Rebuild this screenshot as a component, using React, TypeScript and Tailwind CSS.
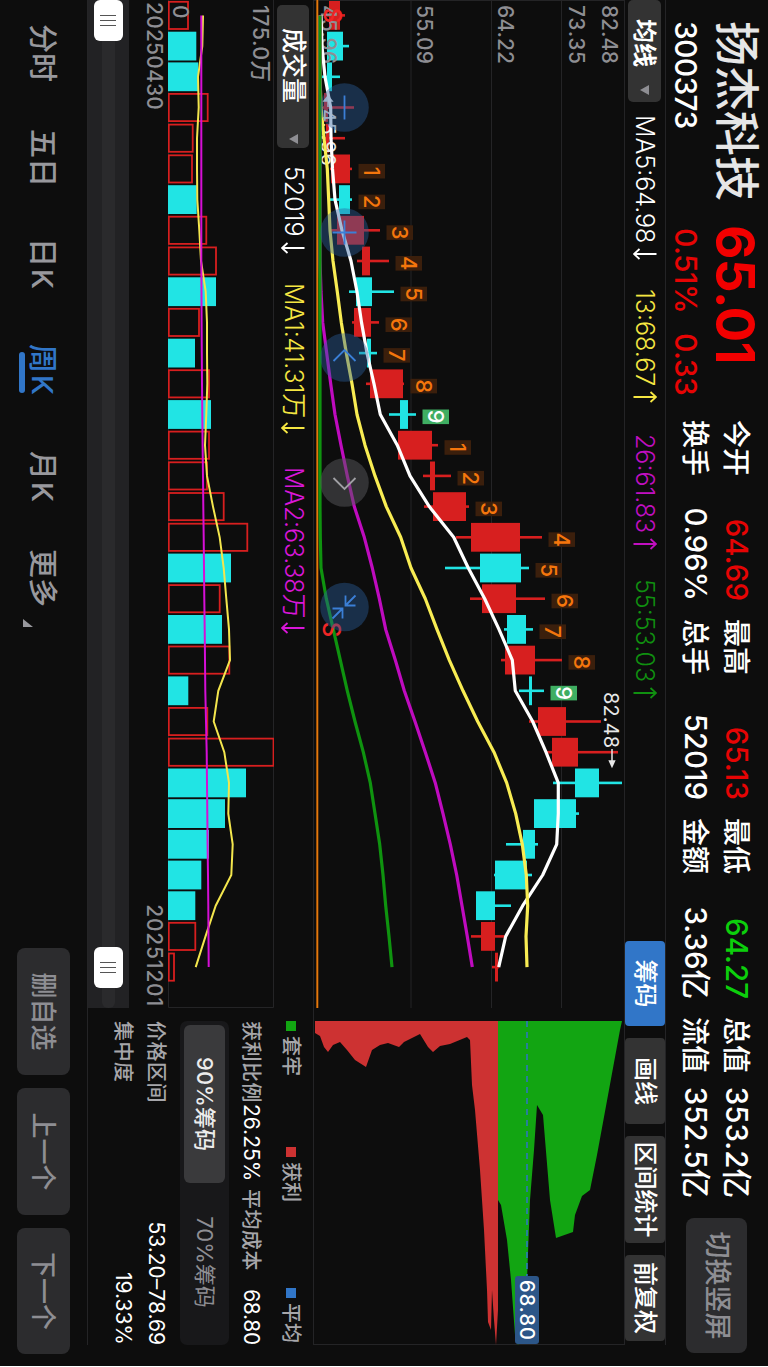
import clsx from "clsx";

const STEP = 30.7;
const cx = (i: number) => 15.4 + i * STEP;

const RED = "#d71f1f";
const CYAN = "#21e4e4";

// low, body bottom, body top, high, direction
const candles: [number, number, number, number, "r" | "c"][] = [
  [10, 12, 23, 28, "r"], [10, 10, 26, 32, "c"], [5, 10, 15, 23, "c"], [6, 7, 11, 37, "r"],
  [8, 9, 12, 28, "r"], [13, 14, 33, 35, "r"], [11, 22, 33, 35, "c"], [14, 20, 47, 63, "r"],
  [40, 45, 53, 72, "r"], [32, 39, 55, 77, "c"], [35, 37, 54, 62, "r"], [42, 50, 54, 60, "c"],
  [49, 53, 86, 87, "r"], [72, 83, 91, 99, "c"], [81, 81, 115, 121, "r"], [106, 113, 118, 134, "r"],
  [107, 116, 149, 152, "r"], [139, 154, 203, 225, "r"], [128, 163, 204, 212, "c"], [153, 165, 199, 228, "r"],
  [187, 190, 209, 216, "c"], [184, 188, 218, 245, "r"], [202, 212, 215, 227, "c"], [212, 221, 249, 284, "r"],
  [230, 235, 261, 301, "r"], [236, 258, 282, 305, "c"], [217, 217, 259, 262, "c"], [189, 206, 218, 221, "c"],
  [177, 178, 210, 215, "c"], [159, 159, 178, 194, "c"], [154, 164, 178, 187, "r"], [175, 178, 181, 182, "r"],
];

// sequential counts, starting from the sixth candle
const counts = [1, 2, 3, 4, 5, 6, 7, 8, 9, 1, 2, 3, 4, 5, 6, 7, 8, 9];

const ma5 = [4, 5, 8, 13.7, 14, 15.5, 18, 25, 34, 40, 44.5, 50, 57, 63.3, 80.3, 93, 112.3, 136.7, 151.3, 167.7, 182, 195.3, 198.3, 215.7, 229, 241.3, 241.3, 239.7, 225.7, 205.7, 188.7, 181.7];
const ma13 = [3, 3, 3, 4, 7, 10.3, 11.7, 13, 16, 20.3, 24.3, 29.3, 35, 40, 48, 58, 69.3, 83.7, 94, 108.3, 120, 132.3, 146, 160.7, 177, 189.7, 198.7, 205.3, 209.3, 210.7, 209, 210];
const ma26 = [3, 3, 3, 3, 3, 3, 3, 3, 3, 4, 5.7, 9.7, 13.7, 18, 24, 30.3, 37.3, 47.3, 55.3, 62.3, 68.7, 78.3, 87.3, 98, 108.3, 118.3, 126, 133.3, 139.7, 145, 150.3, 155.3];
const ma55 = [3, 3, 3, 3, 3, 3, 3, 3, 3, 3, 3, 3, 3, 3, 3, 3, 3, 3.3, 4, 9.3, 16.3, 23.3, 30.3, 38, 46.3, 53.3, 58, 62.7, 66, 68.7, 72, 75];

const volumes = [20, 28.3, 30.3, 39.7, 24.7, 24, 28.7, 38.3, 48, 48, 31, 27, 41, 43, 41, 39, 55.7, 79.3, 63, 51.7, 54, 61.3, 20.3, 39.3, 105.5, 78, 57, 41, 33.3, 27.3, 27.3, 6];
const volMa1 = [35, 34.3, 30, 30.7, 29, 29, 29.3, 31.3, 33, 37.7, 39, 39, 39.3, 38.3, 37, 39, 45, 51.7, 55.7, 58.3, 61, 62, 50.3, 45.7, 56.3, 61, 60.3, 64.7, 63.3, 47.7, 37.5, 27.7];
const volMa2 = [33.3, 33.3, 33.3, 33.3, 33.3, 33.3, 33.3, 33.3, 33.3, 33.5, 33.6, 33.8, 34, 34.3, 34.6, 35, 35.3, 35.7, 36, 36.3, 36.7, 37, 37.3, 38, 38.7, 39, 39.3, 39.6, 40, 40.3, 40.5, 40.7];

const line = (data: number[], base: number) =>
  data.map((d, i) => `${cx(i)},${base - d}`).join(" ");

const grids = [0.5, 63.5, 133.5, 214];

const prices = [
  { label: "82.48", y: 23 },
  { label: "73.35", y: 56 },
  { label: "64.22", y: 127 },
  { label: "55.09", y: 208 },
  { label: "45.96", y: 304 },
];

const quotes = [
  [["今开", "64.69", "text-[#e60404]"], ["换手", "0.96%", "text-white"]],
  [["最高", "65.13", "text-[#e60404]"], ["总手", "52019", "text-white"]],
  [["最低", "64.27", "text-[#0ccf0c]"], ["金额", "3.36亿", "text-white"]],
  [["总值", "353.2亿", "text-white"], ["流值", "352.5亿", "text-white"]],
];

const tabs = [
  { name: "分时", width: "w-[105px]" },
  { name: "五日", width: "w-[109px]" },
  { name: "日K", width: "w-[106px] tracking-[2px]" },
  { name: "周K", width: "w-[107px] tracking-[2px]" },
  { name: "月K", width: "w-[98px] tracking-[2px]" },
  { name: "更多", width: "w-[96px]" },
];

function Arrow({ down }: { down?: boolean }) {
  return (
    <svg width="14" height="24" viewBox="0 0 14 24" fill="none" stroke="currentColor" strokeWidth="1.8" className={clsx("shrink-0", down && "rotate-180")}>
      <path d="M7 23.5V1M2 6.5 7 1l5 5.5" />
    </svg>
  );
}

function Caret() {
  return (
    <svg width="10" height="9" viewBox="0 0 10 9" className="shrink-0">
      <path d="M0 0h10L5 9z" fill="#8e8e93" />
    </svg>
  );
}

function Header() {
  return (
    <header className="flex h-[102px] shrink-0 text-white">
      <div className="w-[205px] pl-[21px]">
        <h1 className="mt-[8px] text-[45px] leading-[48px] font-medium text-[#e6e6e6]">扬杰科技</h1>
        <div className="mt-[8px] text-[30px] leading-[36px] font-medium tracking-[-0.7px]">300373</div>
      </div>
      <div className="w-[215px] pl-[20px] text-[#e60404]">
        <div className="mt-[7px] text-[53px] leading-[52px] font-bold tracking-[-0.6px] text-[#f20000]">65.01</div>
        <div className="mt-[5px] flex gap-[20px] pl-[3px] text-[30px] leading-[36px] font-medium">
          <span className="tracking-[-0.6px]">0.51%</span>
          <span className="tracking-[-0.6px]">0.33</span>
        </div>
      </div>
      <div className="flex gap-[18px]">
        {quotes.map((rows, i) => (
          <div key={i} className="w-[181px] pt-[11px]">
            {rows.map(([label, value, color]) => (
              <div key={label} className="flex h-[41px] items-center justify-between">
                <span className="text-[28px] font-medium">{label}</span>
                <span className={clsx("text-[29.5px] font-medium whitespace-nowrap", color)}>{value}</span>
              </div>
            ))}
          </div>
        ))}
      </div>
      <button className="mt-[21px] ml-[20px] h-[61px] w-[135px] rounded-lg bg-[#2c2c2e] text-[27px] font-medium text-[#8e8e93]">
        切换竖屏
      </button>
    </header>
  );
}

function Toolbar() {
  const btn = "h-[40px] rounded-[4px] text-[24px] font-medium text-white";
  return (
    <div className="flex h-[40px] shrink-0 text-[25px] font-[350]">
      <div className="mt-[4px] flex h-[33px] w-[102px] items-center gap-[18px] rounded-[5px] bg-[#333333] pl-[19px] text-[24px] font-bold text-white">
        均线 <Caret />
      </div>
      <div className="flex w-[839px] items-center pl-[13px] leading-[38px]">
        <span className="flex w-[174px] items-center gap-1 text-white">MA5:64.98 <Arrow down /></span>
        <span className="flex w-[145px] items-center gap-1 text-[#f5e642]">13:68.67 <Arrow /></span>
        <span className="flex w-[145px] items-center gap-1 text-[#c10fc1]">26:61.83 <Arrow /></span>
        <span className="flex items-center gap-1 text-[#109010]">55:53.03 <Arrow /></span>
      </div>
      <div className="flex gap-[12px]">
        <button className={clsx(btn, "w-[85px] bg-[#3176c8]")}>筹码</button>
        <button className={clsx(btn, "w-[86px] bg-[#333333]")}>画线</button>
        <button className={clsx(btn, "w-[107px] bg-[#333333]")}>区间统计</button>
        <button className={clsx(btn, "w-[86px] bg-[#333333]")}>前复权</button>
      </div>
    </div>
  );
}

function CandleChart() {
  return (
    <svg width="1008" height="312" viewBox="0 0 1008 312" className="shrink-0">
      <g stroke="#242426">
        {grids.map((y) => <path key={y} d={`M0 ${y}H1008`} />)}
        <path d="M.5 0V312M0 311.5H1008" />
      </g>
      <path d="M0 307.7H1008" stroke="#7a3d05" strokeWidth="2.6" />
      <path d="M0 307.7H1008" stroke="#f08010" strokeWidth="1.2" />

      {candles.map(([low, bottom, top, high, dir], i) => (
        <g key={i} fill={dir === "r" ? RED : CYAN}>
          <rect x={cx(i) - 1.3} y={308 - high} width="2.6" height={high - low} />
          <rect x={cx(i) - 14.4} y={308 - top} width="28.8" height={top - bottom} />
        </g>
      ))}

      {counts.map((n, k) => {
        const i = k + 5;
        const y = 308 - candles[i][3] - 33;
        return (
          <g key={i}>
            <rect x={cx(i) - 5} y={y} width="14.6" height="26.5" fill={n === 9 ? "#3fae62" : "#3b1f0c"} />
            <text x={cx(i) + 2.3} y={y + 21.5} textAnchor="middle" fontSize="22" fontWeight="500" fill={n === 9 ? "#fff" : "#f5760c"}>{n}</text>
          </g>
        );
      })}

      <g fontSize="21" fill="#8e8e93" fontWeight="450">
        {prices.map((p) => (
          <text key={p.label} x="5" y={p.y} textLength="59">{p.label}</text>
        ))}
      </g>
      <g fill="#e8e8e8" fontSize="20">
        <text x="109" y="304" textLength="57">45.96</text>
        <path d="M107 297H97M101 293l-5 4 5 4z" stroke="#e8e8e8" strokeWidth="1.5" />
        <text x="692" y="21" textLength="56">82.48</text>
        <path d="M749 13h13M761 10.5l5.500 2.500-5.500 2.500z" stroke="#e8e8e8" strokeWidth="1.5" />
      </g>

      <g fill="none" strokeWidth="3.2" strokeLinejoin="round">
        <polyline points={line(ma5, 308)} stroke="#ffffff" />
        <polyline points={line(ma13, 308)} stroke="#f8ec53" />
        <polyline points={line(ma26, 308)} stroke="#bf0bbf" />
        <polyline points={line(ma55, 308)} stroke="#0f930f" />
      </g>

      <g fontSize="24" fontWeight="500" fill="#f02626" textAnchor="middle">
        <text x="15.4" y="301">S</text>
        <text x="629.5" y="302">S</text>
      </g>

      {[107.5, 232.5, 357.5, 482.5, 607].map((x) => (
        <circle key={x} cx={x} cy="280.5" r="24.3" fill={x === 482.5 ? "#58585c" : "#2b5f9e"} fillOpacity={x === 482.5 ? 0.5 : 0.42} />
      ))}
      <g fill="none" stroke="#3b7fd6" strokeWidth="1.8">
        <path d="M95.5 280.5h24" />
        <path d="M220.5 280.5h24M232.5 268.5v24" />
        <path d="M361 291.5l-11-11 11-11" />
        <path d="M478 291.5l11-11-11-11" stroke="#a0a0a4" />
        <path d="M595.5 269.5l10 10M605.5 269.5v10h-10" />
        <path d="M618.5 292.5l-10-10M608.5 292.5v-10h10" />
      </g>
    </svg>
  );
}

function ChipChart() {
  return (
    <svg width="337" height="312" viewBox="1008 0 337 312" className="shrink-0">
      <path d="M1008 .5H1345M1008 311.5H1345M1344.5 0V312" stroke="#242426" fill="none" />
      <path
        fill="#cd3232"
        d="M1021 127H1310L1345 129 1320 131 1290 133 1330 134 1322 137 1290 138 1230 141 1170 145 1110 150 1085 153 1040 155 1037 158 1044 175 1046 185 1052 192 1047 197 1034 205 1042 221 1047 226 1043 237 1045 245 1050 253 1067 259 1060 270 1050 278 1042 285 1045 292 1052 297 1047 301 1036 305 1033 310H1021z"
      />
      <path
        fill="#12a512"
        d="M1021 3 1030 5 1155 28 1190 35 1196 43 1215 50 1232 52 1238 69 1200 75 1115 82 1105 88 1150 91 1200 95 1280 98 1330 102 1345 107 1335 110 1280 114 1240 118 1205 124 1200 127H1021z"
      />
      <path d="M1021 98H1276" stroke="#2f74c8" strokeWidth="1.5" strokeDasharray="6 5" />
      <rect x="1276" y="86" width="68" height="24" rx="3" fill="#2c5688" />
      <text x="1280" y="105" fontSize="20" fontWeight="500" fill="#fff" textLength="60">68.80</text>
    </svg>
  );
}

function Volume() {
  return (
    <>
      <div className="flex h-[39px] items-center pl-[5px] text-[25px] font-[350]">
        <div className="flex h-[32px] w-[143px] items-center gap-[31px] rounded-[5px] bg-[#333333] pl-[23px] text-[25px] font-medium text-white">
          成交量 <Caret />
        </div>
        <span className="flex w-[117px] items-center gap-1 pl-[18px] text-white">52019 <Arrow down /></span>
        <span className="flex w-[184px] items-center gap-[3px] pl-[18px] text-[#f5e642]"><span className="tracking-[-0.2px]">MA1:41.31万</span> <Arrow down /></span>
        <span className="flex items-center gap-[3px] pl-[18px] text-[#d816d8]"><span className="tracking-[-0.2px]">MA2:63.38万</span> <Arrow down /></span>
      </div>
      <svg width="1008" height="106" viewBox="0 0 1008 106">
        <path d="M0 .5H1007.5V105.5H0" stroke="#242426" fill="none" />
        <text x="5" y="21" fontSize="21.5" fontWeight="450" fill="#8e8e93" textLength="77">175.0万</text>
        {volumes.map((v, i) =>
          candles[i][4] === "r" ? (
            <rect key={i} x={cx(i) - 13.6} y={106 - v} width="27.2" height={v - 0.8} fill="none" stroke={RED} strokeWidth="1.8" />
          ) : (
            <rect key={i} x={cx(i) - 14.4} y={106 - v} width="28.8" height={v} fill={CYAN} />
          )
        )}
        <text x="5" y="101" fontSize="21" fontWeight="450" fill="#8e8e93">0</text>
        <g fill="none" strokeWidth="2">
          <polyline points={line(volMa1, 106)} stroke="#f3e64d" />
          <polyline points={line(volMa2, 106)} stroke="#d60fd6" />
        </g>
      </svg>
      <div className="flex h-[39px] justify-between pr-[1px] pl-[2px] text-[21px] leading-[28px] font-[450] text-[#8e8e93]">
        <span className="tracking-[0.2px]">20250430</span>
        <span className="tracking-[0.8px]">20251201</span>
      </div>
    </>
  );
}

function Handle() {
  return (
    <div className="flex h-[29px] w-[41px] items-center justify-center gap-[4px] rounded-[6px] bg-white">
      <i className="h-[16px] w-px bg-[#555]" />
      <i className="h-[16px] w-px bg-[#555]" />
      <i className="h-[16px] w-px bg-[#555]" />
    </div>
  );
}

function Slider() {
  return (
    <div className="flex h-[41px] items-center bg-[#222224]">
      <div className="flex h-[13px] w-full items-center justify-between rounded-r-md bg-[#2a2a2c] pr-[20px]">
        <Handle />
        <Handle />
      </div>
    </div>
  );
}

function Legend({ color, name }: { color: string; name: string }) {
  return (
    <span className="flex items-center gap-[5px]">
      <i className={clsx("mt-px h-[10px] w-[10px]", color)} />
      {name}
    </span>
  );
}

function ChipPanel() {
  return (
    <aside className="w-[337px] pl-[13px] text-[20px] font-medium text-[#a6a6aa]">
      <div className="flex h-[43px] items-center">
        <div className="w-[126px]"><Legend color="bg-[#12a512]" name="套牢" /></div>
        <div className="w-[141px]"><Legend color="bg-[#cd3232]" name="获利" /></div>
        <Legend color="bg-[#3176c8]" name="平均" />
      </div>
      <div className="flex h-[38px] items-center whitespace-nowrap">
        <span className="w-[83px] tracking-[0.5px]">获利比例</span>
        <span className="w-[85px] text-[21px] font-normal text-white">26.25%</span>
        <span className="tracking-[0.5px]">平均成本</span>
        <span className="ml-auto text-[21px] font-normal tracking-[-0.3px] text-white">68.80</span>
      </div>
      <div className="mt-[3px] flex h-[49px] rounded-[7px] bg-[#18181a] p-[4px] text-[22px]">
        <div className="flex w-[158px] items-center justify-center rounded-[6px] bg-[#3a3a3c] text-[#ececec]">90%筹码</div>
        <div className="flex flex-1 items-center justify-center font-normal text-[#8e8e93]">70%筹码</div>
      </div>
      <div className="mt-[7px] flex h-[33px] items-center justify-between">
        <span className="tracking-[0.5px]">价格区间</span>
        <span className="text-[21px] font-normal text-white">53.20–78.69</span>
      </div>
      <div className="flex h-[33px] items-center justify-between">
        <span className="tracking-[0.5px]">集中度</span>
        <span className="text-[21px] font-normal text-white">19.33%</span>
      </div>
    </aside>
  );
}

function Footer() {
  const btn = "h-[53px] rounded-lg bg-[#2c2c2e] text-[26px] font-medium text-[#8e8e93]";
  return (
    <footer className="flex h-[87px] items-center">
      <nav className="flex w-[948px] items-center pt-[3px] pl-[24px] text-[29px] font-medium text-[#98989d]">
        {tabs.map(({ name, width }) => (
          <div key={name} className={clsx("relative whitespace-nowrap", width, name === "周K" && "text-[#3176c8]")}>
            {name}
            {name === "周K" && <i className="absolute bottom-[-1px] left-[8px] h-[6px] w-[41px] rounded-full bg-[#3176c8]" />}
            {name === "更多" && (
              <svg width="8" height="10" viewBox="0 0 8 10" className="absolute bottom-[3px] left-[70px]">
                <path d="M8 0v10H0z" fill="#98989d" />
              </svg>
            )}
          </div>
        ))}
      </nav>
      <div className="flex gap-[13px]">
        <button className={clsx(btn, "w-[127px]")}>删自选</button>
        <button className={clsx(btn, "w-[127px]")}>上一个</button>
        <button className={clsx(btn, "w-[126px]")}>下一个</button>
      </div>
    </footer>
  );
}

export default function App() {
  return (
    <div className="h-[1367px] w-[768px] overflow-hidden bg-white">
      {/* landscape screen, turned a quarter clockwise */}
      <div className="flex h-[768px] w-[1366px] origin-top-left translate-x-[768px] rotate-90 flex-col bg-[#0d0d0d] font-['Inter','Noto_Sans_CJK_SC',sans-serif]">
        <Header />
        <div className="h-px w-[1345px] shrink-0 bg-[#242426]" />
        <Toolbar />
        <div className="flex h-[312px] shrink-0">
          <CandleChart />
          <ChipChart />
        </div>
        <div className="flex h-[226px] w-[1345px] shrink-0 border-b border-[#242426]">
          <div className="w-[1008px]">
            <Volume />
            <Slider />
          </div>
          <ChipPanel />
        </div>
        <Footer />
      </div>
    </div>
  );
}
